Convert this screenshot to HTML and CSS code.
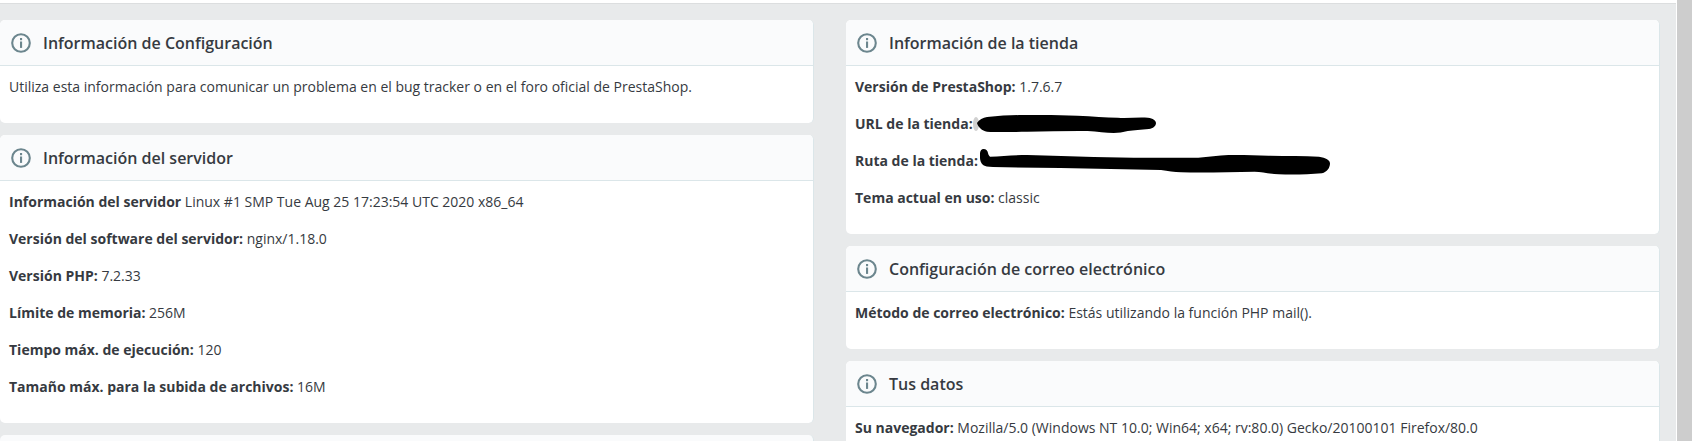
FILE: index.html
```html
<!DOCTYPE html>
<html lang="es">
<head>
<meta charset="utf-8">
<title>Información de Configuración</title>
<link rel="stylesheet" href="styles.css">
</head>
<body>
<div class="page">
  <main class="content">
    <div class="col">
      <section class="card">
        <header class="card-header"><svg class="info" viewBox="0 0 20 20"><circle cx="10" cy="10" r="8.8"/><rect class="dot" x="9" y="5" width="2.1" height="2.2"/><rect class="dot" x="9" y="8.5" width="2.1" height="6.4"/></svg><h3>Información de Configuración</h3></header>
        <div class="card-body">
          <p>Utiliza esta información para comunicar un problema en el bug tracker o en el foro oficial de PrestaShop.</p>
        </div>
      </section>
      <section class="card">
        <header class="card-header"><svg class="info" viewBox="0 0 20 20"><circle cx="10" cy="10" r="8.8"/><rect class="dot" x="9" y="5" width="2.1" height="2.2"/><rect class="dot" x="9" y="8.5" width="2.1" height="6.4"/></svg><h3>Información del servidor</h3></header>
        <div class="card-body">
          <p><b>Información del servidor</b> Linux #1 SMP Tue Aug 25 17:23:54 UTC 2020 x86_64</p>
          <p><b>Versión del software del servidor:</b> nginx/1.18.0</p>
          <p><b>Versión PHP:</b> 7.2.33</p>
          <p><b>Límite de memoria:</b> 256M</p>
          <p><b>Tiempo máx. de ejecución:</b> 120</p>
          <p><b>Tamaño máx. para la subida de archivos:</b> 16M</p>
        </div>
      </section>
      <section class="card stub"></section>
    </div>
    <div class="col">
      <section class="card">
        <header class="card-header"><svg class="info" viewBox="0 0 20 20"><circle cx="10" cy="10" r="8.8"/><rect class="dot" x="9" y="5" width="2.1" height="2.2"/><rect class="dot" x="9" y="8.5" width="2.1" height="6.4"/></svg><h3>Información de la tienda</h3></header>
        <div class="card-body">
          <p><b>Versión de PrestaShop:</b> 1.7.6.7</p>
          <p class="redacted"><b>URL de la tienda:</b><svg class="scribble url" viewBox="0 0 178 20" preserveAspectRatio="none"><ellipse class="smudge" cx="-1" cy="10" rx="3" ry="7"/><path d="M0 9 C2 6 6 3.5 10 3 C25 1.5 40 1 50 1 C70 0.8 85 1 100 1.7 C115 2.3 128 3.5 140 3.7 C150 4.4 160 3 170 3.7 C175 4.2 178 6.5 178 9 C178 12 175 14.5 171 15 C163 16 156 16 150 17 C145 18 141 19 136 19 C128 19 120 17.5 110 17 C90 16.8 70 17.4 50 17.7 C35 18 20 18.3 10 17.7 C5 17 1 13 0 9 Z"/></svg></p>
          <p class="redacted"><b>Ruta de la tienda:</b><svg class="scribble path" viewBox="0 0 348 26" preserveAspectRatio="none"><path d="M0 4.3 C0 2 1.5 0 3.5 0 C6 0 8 2 8 4.3 C8.5 6 9 7 10 7.7 C22 7.4 35 6 47 6 C70 6.5 92 7.5 113 8 C135 8.5 158 9 180 8.7 C192 8.7 205 9 217 8.7 C227 8 237 6.2 247 6 C260 5.8 274 6.2 287 6.7 C304 7 322 7 337 7.7 C344 9 348 11 348 14.3 C348 19 345 23 340 24.3 C326 25.5 311 25.8 297 25.3 C288 25 281 23 273 22.7 C249 23 224 24 200 23.3 C193 23 187 22 180 21 C147 20.4 113 19.5 80 19 C58 18.8 35 18.6 13 18 C8 18 4.5 17 3 16 C1 14 0 11.5 0 9 Z"/></svg></p>
          <p><b>Tema actual en uso:</b> classic</p>
        </div>
      </section>
      <section class="card">
        <header class="card-header"><svg class="info" viewBox="0 0 20 20"><circle cx="10" cy="10" r="8.8"/><rect class="dot" x="9" y="5" width="2.1" height="2.2"/><rect class="dot" x="9" y="8.5" width="2.1" height="6.4"/></svg><h3>Configuración de correo electrónico</h3></header>
        <div class="card-body">
          <p><b>Método de correo electrónico:</b> Estás utilizando la función PHP mail().</p>
        </div>
      </section>
      <section class="card">
        <header class="card-header"><svg class="info" viewBox="0 0 20 20"><circle cx="10" cy="10" r="8.8"/><rect class="dot" x="9" y="5" width="2.1" height="2.2"/><rect class="dot" x="9" y="8.5" width="2.1" height="6.4"/></svg><h3>Tus datos</h3></header>
        <div class="card-body">
          <p><b>Su navegador:</b> Mozilla/5.0 (Windows NT 10.0; Win64; x64; rv:80.0) Gecko/20100101 Firefox/80.0</p>
        </div>
      </section>
    </div>
  </main>
  <div class="scrollbar"></div>
</div>
</body>
</html>
```

FILE: styles.css
```css
html, body {
  margin: 0;
  height: 441px;
  overflow: hidden;
  background: #fff;
}
body {
  font-family: "Open Sans", sans-serif;
  font-size: 14px;
  line-height: 21px;
  color: #363a41;
}
.page {
  display: flex;
  height: 441px;
}
.content {
  flex: 1;
  display: flex;
  gap: 32px;
  align-items: flex-start;
  box-sizing: border-box;
  height: 441px;
  padding: 17px 16px 0 0;
  margin-right: 1px;
  overflow: hidden;
  background: #e8eaeb;
  border-top: 3px solid #fff;
  box-shadow: inset 0 1px 0 #dcdedf;
}
.col {
  flex: 1;
  min-width: 0;
  display: flex;
  flex-direction: column;
  gap: 12px;
}
.card {
  background: #fff;
  border-radius: 5px;
  border-right: 1px solid #dbe6e9;
  overflow: hidden;
  flex: none;
}
.card-header {
  display: flex;
  align-items: center;
  height: 45px;
  padding-left: 11px;
  background: #fafbfc;
  border-bottom: 1px solid #dbe6e9;
}
.info {
  width: 20px;
  height: 20px;
  flex: none;
  margin-right: 12px;
}
.info circle {
  fill: none;
  stroke: #6c868e;
  stroke-width: 2.1;
}
.info .dot {
  fill: #6c868e;
}
h3 {
  margin: 0;
  padding-top: 2px;
  font-size: 16px;
  font-weight: 600;
  color: #363a41;
}
.card-body {
  padding: 10px 9px;
}
p {
  margin: 0 0 16px;
}
b {
  font-weight: 700;
}
.redacted {
  position: relative;
}
.scribble {
  position: absolute;
  overflow: visible;
}
.scribble path {
  fill: #000;
}
.scribble .smudge {
  fill: #d0d0d0;
}
.scribble.url {
  left: 122px;
  top: 1px;
  width: 179px;
  height: 20px;
}
.scribble.path {
  left: 125px;
  top: -1px;
  width: 350px;
  height: 26px;
}
.stub {
  height: 40px;
  background: #fafbfc;
}
.scrollbar {
  width: 15px;
  flex: none;
  background: #cdcdcd;
}
```
